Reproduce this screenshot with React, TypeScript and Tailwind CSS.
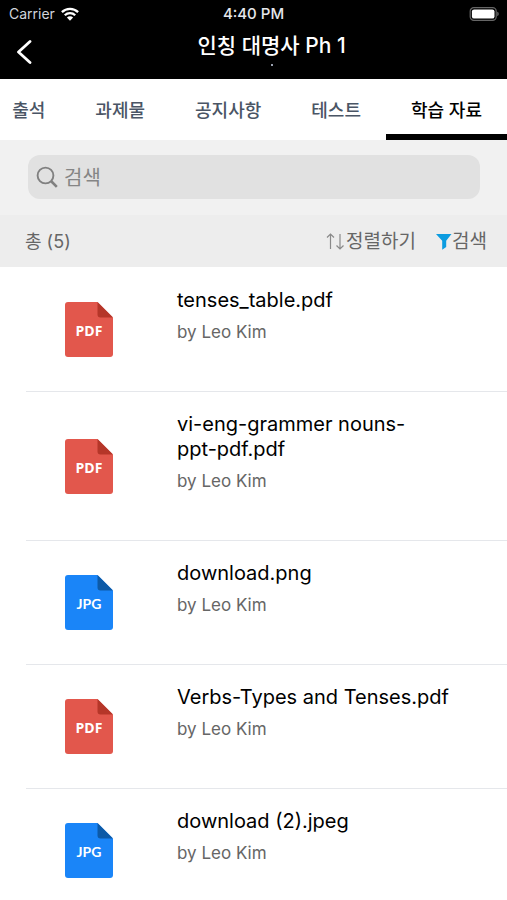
import { useState } from "react";

type FileKind = "pdf" | "jpg";

interface Material {
  id: number;
  name: string;
  author: string;
  kind: FileKind;
}

const tabs = ["출석", "과제물", "공지사항", "테스트", "학습 자료"];

const materials: Material[] = [
  { id: 1, name: "tenses_table.pdf", author: "Leo Kim", kind: "pdf" },
  { id: 2, name: "vi-eng-grammer nouns-\nppt-pdf.pdf", author: "Leo Kim", kind: "pdf" },
  { id: 3, name: "download.png", author: "Leo Kim", kind: "jpg" },
  { id: 4, name: "Verbs-Types and Tenses.pdf", author: "Leo Kim", kind: "pdf" },
  { id: 5, name: "download (2).jpeg", author: "Leo Kim", kind: "jpg" },
];

const kindStyles = {
  pdf: { label: "PDF", page: "#e2574c", fold: "#b53629", text: "font-bold font-['Open_Sans',sans-serif]" },
  jpg: { label: "JPG", page: "#1a85f8", fold: "#0d5aa7", text: "font-bold font-[Lato,sans-serif]" },
};

function FileIcon({ kind }: { kind: FileKind }) {
  const style = kindStyles[kind];
  return (
    <div className="relative h-[55px] w-12 shrink-0">
      <svg viewBox="0 0 48 55" className="h-full w-full" aria-hidden="true">
        <path d="M3 0H32.5L48 15.5V52a3 3 0 0 1-3 3H3a3 3 0 0 1-3-3V3a3 3 0 0 1 3-3Z" fill={style.page} />
        <path d="M32.5 0L48 15.5H35.5a3 3 0 0 1-3-3Z" fill={style.fold} />
      </svg>
      <span className={`absolute inset-x-0 top-[19px] text-center text-sm leading-5 text-white ${style.text}`}>
        {style.label}
      </span>
    </div>
  );
}

function StatusBar() {
  return (
    <div className="grid h-7 grid-cols-3 items-center px-2 leading-5">
      <div className="flex items-center gap-1.5 pl-px text-gray-300">
        <span className="text-sm">Carrier</span>
        <svg viewBox="0 0 18 14" className="h-3.5 w-[18px]" fill="none" stroke="white" strokeWidth="2.3" aria-hidden="true">
          <path d="M0.9 5.1a11.6 11.6 0 0 1 16.2 0" />
          <path d="M3.8 8.2a7.4 7.4 0 0 1 10.4 0" />
          <path d="M9 13.8L5.9 10.6a4.4 4.4 0 0 1 6.2 0Z" fill="white" stroke="none" />
        </svg>
      </div>
      <span className="text-center text-[15px] font-medium whitespace-nowrap text-gray-200">4:40 PM</span>
      <svg viewBox="0 0 30 14" className="h-3.5 w-[30px] justify-self-end" aria-hidden="true">
        <rect x="1.2" y="0.7" width="26" height="12.6" rx="3.6" fill="none" stroke="#666" strokeWidth="1.2" />
        <rect x="2.9" y="2.4" width="22.6" height="9.2" rx="2.2" fill="white" />
        <path d="M28.3 4.8c1.8.6 1.8 3.8 0 4.4Z" fill="#777" />
      </svg>
    </div>
  );
}

export default function App() {
  const [active, setActive] = useState("학습 자료");
  const [query, setQuery] = useState("");

  const visible = materials.filter((m) => m.name.toLowerCase().includes(query.toLowerCase()));

  return (
    <div className="min-h-screen overflow-hidden bg-white font-[Inter,'Noto_Sans_CJK_KR',sans-serif] text-black">
      {/* Header */}
      <header className="bg-black text-white">
        <StatusBar />
        <div className="flex h-[51px] items-start">
          <button type="button" aria-label="뒤로" className="flex h-12 w-9 items-center pl-4">
            <svg viewBox="0 0 16 24" className="h-6 w-4" fill="none" stroke="white" strokeWidth="2.8" aria-hidden="true">
              <path d="M14 1.5L2.5 12L14 22.5" strokeLinecap="round" strokeLinejoin="round" />
            </svg>
          </button>
          <div className="flex flex-1 flex-col items-center gap-1 pt-1">
            <h1 className="text-[21px] leading-7 font-medium">인칭 대명사 Ph 1</h1>
            <span className="h-0.5 w-0.5 bg-gray-400" />
          </div>
        </div>
      </header>

      {/* Tabs */}
      <nav className="flex h-[61px] justify-end">
        {tabs.map((tab) => (
          <button
            key={tab}
            type="button"
            onClick={() => setActive(tab)}
            className={`shrink-0 border-b-6 px-[25px] pt-2 text-lg font-medium whitespace-nowrap ${
              tab === active ? "border-black text-black" : "border-transparent text-gray-600"
            }`}
          >
            {tab}
          </button>
        ))}
      </nav>

      {/* Search */}
      <div className="bg-[#f1f1f1] pt-[15px] pr-[27px] pb-4 pl-7">
        <label className="flex h-11 items-center gap-1.5 rounded-xl bg-[#e1e1e1] px-2 text-[#808080]">
          <svg viewBox="0 0 22 22" className="h-[22px] w-[22px] shrink-0" fill="none" stroke="currentColor" aria-hidden="true">
            <circle cx="9.5" cy="9.5" r="7.9" strokeWidth="1.9" />
            <path d="M15 15L20.8 20.8" strokeWidth="2.6" />
          </svg>
          <input
            type="text"
            aria-label="검색"
            placeholder="검색"
            value={query}
            onChange={(e) => setQuery(e.target.value)}
            className="min-w-0 flex-1 bg-transparent pt-0.5 text-xl outline-none placeholder:text-[#858585]"
          />
        </label>
      </div>

      {/* Count and sorting */}
      <div className="flex h-[52px] items-center justify-between bg-[#ededed] pt-0.5 pr-5 pl-[25px] text-[#666]">
        <span className="text-lg">총 ({visible.length})</span>
        <div className="flex gap-5 text-[19px]">
          <button type="button" className="flex items-center">
            <svg viewBox="0 0 20 18" className="h-[18px] w-5" fill="none" stroke="#8a8a8a" strokeWidth="1.2" aria-hidden="true">
              <path d="M4.5 16V1M1 4.5L4.5 1L8 4.5M14 1V16M10.5 12.5L14 16L17.5 12.5" />
            </svg>
            정렬하기
          </button>
          <button type="button" className="flex items-center">
            <svg viewBox="0 0 16 16" className="h-4 w-4" fill="#0c9ce0" aria-hidden="true">
              <path d="M0 0H15.5L10.2 6.8V13L6.2 15.8V6.8Z" />
            </svg>
            검색
          </button>
        </div>
      </div>

      {/* Files */}
      <ul className="pt-px">
        {visible.map((item) => (
          <li key={item.id} className="ml-[26px] flex items-center border-b border-gray-200 pl-[39px]">
            <FileIcon kind={item.kind} />
            <div className="min-w-0 flex-1 pt-5 pr-[50px] pb-12 pl-16">
              <h2 className="text-xl leading-[25px] whitespace-pre-line">{item.name}</h2>
              <p className="mt-2 text-[17px] leading-[22px] text-[#666]">by {item.author}</p>
            </div>
          </li>
        ))}
      </ul>
    </div>
  );
}
